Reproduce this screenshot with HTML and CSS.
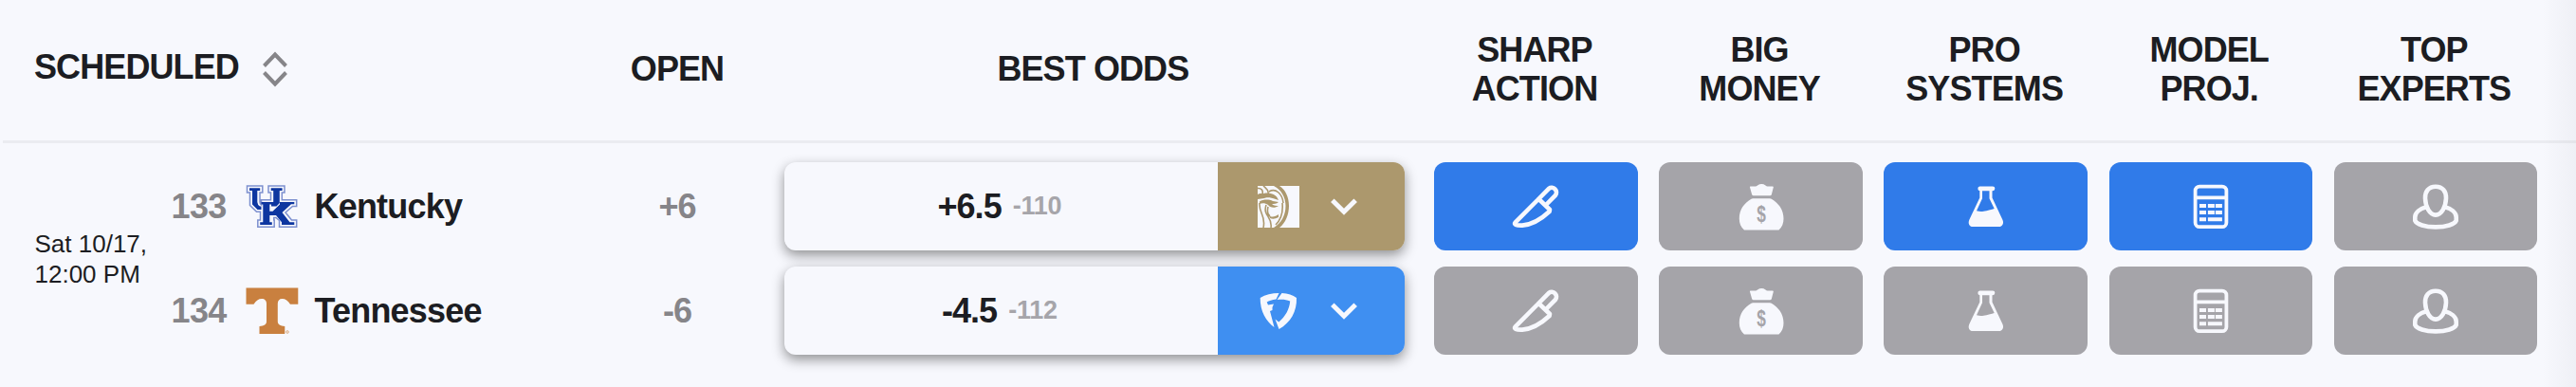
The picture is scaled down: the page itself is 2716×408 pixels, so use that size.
FILE: index.html
```html
<!DOCTYPE html>
<html lang="en">
  <head>
    <meta charset="utf-8">
    <title>Odds</title>
    <link rel="stylesheet" href="styles.css">
  </head>
  <body>
    <!-- shared icons -->
    <svg class="sprite" width="0" height="0">
      <symbol id="knife" viewBox="0 0 50 50">
        <path class="line" d="M27.5 17.5 L39 5.8 a5 5 0 0 1 7 7 L35 24 M27.5 17.5 L3.5 41.6 C2 43.4 4 44.8 11 44.6 C20 44 31 38 39.6 30 L40 28 L28 16.500"/>
      </symbol>
      <symbol id="bag" viewBox="0 0 50 50">
        <path d="M13.500 3.400 h5.500 q1-.2 2-1 q4.500-2.600 8.500 0 q1 .8 2 1 h5.500 q1 .1 .8 1.200 l-2 7.600 q-.4 1.100-1.600 1.100 h-17.400 q-1.200 0-1.600-1.100 l-2.200-7.600 q-.2-1.100 .5-1.200z"/>
        <path d="M16 16.200 h18 q1 0 1.800.6 C43 21 48.500 28 48.500 37.500 C48.500 42.500 47 46.500 43.500 49.600 H7 C3.500 46.500 1.800 42.500 1.800 37.500 C1.800 28 7 21 14.500 16.800 q.8-.6 1.500-.6z"/>
        <text class="dollar" transform="translate(25 40.500) scale(.75 1)" text-anchor="middle">$</text>
      </symbol>
      <symbol id="flask" viewBox="0 0 50 50">
        <path d="M18.200 3.500 h13.800 a2.200 2.200 0 0 1 0 4.700 h-.5 v7.300 L42.300 38.500 c2 4-.2 7.600-3.800 7.600 H11 c-3.600 0-5.400-3.600-3.600-7.600 L18.300 15.500 V8.200 a2.400 2.400 0 0 1 -.1-4.700z M21 8.200 V16.200 L15 29.300 C21 31 24 29.500 33.700 27 L28.500 16.200 V8.200z" fill-rule="evenodd"/>
      </symbol>
      <symbol id="calc" viewBox="0 0 50 50">
        <rect class="line calc-line" x="8.600" y="3.600" width="32.800" height="42.600" rx="4.500"/>
        <path d="M8 13.400h34v3.800H8z M13 22h7v4h-7z M21.900 22h7v4h-7z M29.900 22h7v4h-7z M13 29h7v4h-7z M21.900 29h7v4h-7z M29.900 29h7v4h-7z M13 36.200h7v4h-7z M21.900 36.200h15v4h-15z"/>
      </symbol>
      <symbol id="person" viewBox="0 0 50 50">
        <path class="line" d="M25 3.700 C32.500 3.700 36.300 9 36 16 C35.600 25 31.500 33.600 25 33.600 C18.500 33.600 14.400 25 14 16 C13.700 9 17.500 3.700 25 3.700z M15 25.300 C8.500 27 3.300 31 3.300 36 V39.500 C5 43.500 14 46.400 25 46.400 C36 46.400 45 43.500 46.700 39.500 V36 C46.700 31 41.500 27 35 25.300"/>
      </symbol>
      <symbol id="chevron" viewBox="0 0 30 20">
        <path class="line chevron-line" d="M2.800 3.200 L15 15.200 L27.200 3.200"/>
      </symbol>
    </svg>

    <div class="board">
      <div class="header">
        <div class="col-scheduled">
          <span class="sort-label">SCHEDULED</span>
          <svg class="sort" viewBox="0 0 28 40"><path d="M2.500 16.500 L14 4.500 L25.500 16.500 M2.500 23.500 L14 35.500 L25.500 23.500"/></svg>
        </div>
        <div class="col-open">OPEN</div>
        <div class="col-odds">BEST ODDS</div>
        <div class="col-pro">SHARP<br>ACTION</div>
        <div class="col-pro">BIG<br>MONEY</div>
        <div class="col-pro">PRO<br>SYSTEMS</div>
        <div class="col-pro">MODEL<br>PROJ.</div>
        <div class="col-pro">TOP<br>EXPERTS</div>
      </div>

      <div class="game">
        <div class="date">Sat 10/17,<br>12:00 PM</div>
        <div class="teams">
          <div class="row">
            <div class="team">
              <span class="rotation">133</span>
              <svg class="logo" viewBox="0 0 56 50">
                <path class="uk-edge" d="M1.500 3 H17.800 V10 H15 V20 Q15 22 16.500 23 V17.800 H26.500 V10 H24 V3 H41 V10 H38.300 V17.800 H53.700 V24.500 H49.500 L42 31 L48.500 39 H53.700 V46.300 H35.500 V39.500 L32 36.500 H29.800 V39 H30.200 V46.300 H12.800 V39 H15.500 V30.200 H11.500 L4.500 23.500 V10 H1.500z"/>
                <path class="uk-fill" d="M4 5.300 H15.200 V8 H12.300 V20 Q12.500 23 15 24.500 H16.500 V28 H12.500 L7 22.500 V8 H4z M26.700 5.300 H38.600 V8 H35.800 V21 L32.500 24.500 H27 V20 H29.200 V8 H26.700z M16.500 20 H27.500 V22.500 H25.300 V29.800 H28.500 L36 22.500 V20 H51.300 V22.300 H48 L38.500 31 L46.500 41.300 H51.300 V44 H38 V41.300 L32 34 H25.300 V41.300 H27.800 V44 H15.200 V41.300 H18.300 V22.500 H16.500z"/>
              </svg>
              <span class="name">Kentucky</span>
            </div>
            <div class="col-open line-open">+6</div>
            <div class="col-odds odds-box">
              <div class="odds"><b>+6.5</b><small>-110</small></div>
              <div class="book book-mgm">
                <svg class="book-logo" viewBox="0 0 44 44">
                  <path class="book-fill" d="M0 0h44v44H0z"/>
                  <path class="mgm-fill" d="M17 0 C25 4 29.500 12 29.500 21 C29.500 31 25 39 17 44 H23 C29.500 39 33 30 33 21 C33 12 29.500 4 23 0z M0 9 C3 7 5 9 8 7.500 C14 7 20 9 22 15 L19 14 C14 12 9 12 7 13 L0 14z M2 16.500 C6 14 12 14 16 16 L22 17 C20 19 17 19 15 19 C17 21 20 21 22 21 C18 24 13 23 11 20 C8 18 5 18 2 19z M12 31 C15 34 19 32 22 30 L22 33 Q17 36 13 34z"/>
                  <path class="mgm-line" d="M0 2.500 C4 2 6 5 5 9 M6 0 C9 3 12 4 11 8 M12 6 C19 2 26 8 27 18 M2 18 C1 29 9 31 6 44 M9 20 C5 32 16 32 14 44 M11 22 C10 26 10 30 13 32 M26 18 C27 28 24 36 19 41"/>
                </svg>
                <svg class="chevron"><use href="#chevron"/></svg>
              </div>
            </div>
            <div class="col-pro pro active"><svg><use href="#knife"/></svg></div>
            <div class="col-pro pro"><svg><use href="#bag"/></svg></div>
            <div class="col-pro pro active"><svg><use href="#flask"/></svg></div>
            <div class="col-pro pro active"><svg><use href="#calc"/></svg></div>
            <div class="col-pro pro"><svg><use href="#person"/></svg></div>
          </div>

          <div class="row">
            <div class="team">
              <span class="rotation">134</span>
              <svg class="logo" viewBox="0 0 56 50">
                <path class="tn-fill" d="M.5 .5 H55.300 V17.700 H47 C44.500 14 42 12 38.500 12 C35.500 12 33.800 14 33.800 17 V36 C33.800 39 36.500 40.500 41.300 41 V49 H14.500 V41 C19.500 40.500 22 39 22 36 V17 C22 14 20 12 17 12 C13.500 12 11 14 8.500 17.700 H.5z"/>
                <circle class="tn-mark" cx="44" cy="47" r="1.300"/>
              </svg>
              <span class="name">Tennessee</span>
            </div>
            <div class="col-open line-open">-6</div>
            <div class="col-odds odds-box">
              <div class="odds"><b>-4.5</b><small>-112</small></div>
              <div class="book book-fanduel">
                <svg class="book-logo" viewBox="0 0 44 44">
                  <path class="book-fill" d="M22.500 3 L19.500 9.500 C15 10 12 11 9.700 12.500 L11 15.500 L17 14.500 L15.500 18 L15.500 21 L13 22 L17.500 39 C9 33 2.500 22 2.700 8 C8 4.500 15 3 22.500 3z M25.500 3 C32 3.300 37 5 41 8 C41.500 22 35 34 22.500 41 L18.500 30.500 L22.300 33.500 C29 28 33.500 20 34.200 11.500 C30 9.700 26 9.500 20.500 10z"/>
                </svg>
                <svg class="chevron"><use href="#chevron"/></svg>
              </div>
            </div>
            <div class="col-pro pro"><svg><use href="#knife"/></svg></div>
            <div class="col-pro pro"><svg><use href="#bag"/></svg></div>
            <div class="col-pro pro"><svg><use href="#flask"/></svg></div>
            <div class="col-pro pro"><svg><use href="#calc"/></svg></div>
            <div class="col-pro pro"><svg><use href="#person"/></svg></div>
          </div>
        </div>
      </div>
      <div class="edge-fade"></div>
    </div>
  </body>
</html>
```
FILE: styles.css
```css
* {
  box-sizing: border-box;
}
body {
  margin: 0;
  background-color: #f7f8fd;
  color: #1c1d22;
  font-family: "Liberation Sans", Arial, sans-serif;
  font-size: 36px;
  font-weight: bold;
}
.sprite {
  display: none;
}
.board {
  position: relative;
  height: 408px;
  padding-left: 3px;
  overflow: hidden;
}

/* header */
.header {
  display: flex;
  align-items: center;
  height: 151px;
  padding: 0 0 3px 33px;
  border-bottom: 3px solid #ebecf1;
  line-height: 41px;
  letter-spacing: -0.9px;
  text-align: center;
}
.col-scheduled {
  display: flex;
  align-items: center;
  width: 565px;
}
.sort-label {
  padding-bottom: 5px;
}
.sort {
  width: 28px;
  height: 40px;
  margin-left: 24px;
}
.sort path {
  fill: none;
  stroke: #868589;
  stroke-width: 4;
}
.col-open {
  flex: none;
  width: 226px;
  text-align: center;
}
.col-odds {
  flex: none;
  width: 653.7px;
  margin-right: 31.6px;
}
.col-pro {
  flex: none;
  width: 214.4px;
  margin-right: 22.7px;
}
.header .col-odds,
.header .col-pro {
  padding-right: 3px;
}

/* game rows */
.game {
  display: flex;
  align-items: center;
  padding: 20.3px 0 0 33.500px;
}
.date {
  width: 146.500px;
  font-size: 26px;
  font-weight: normal;
  line-height: 32px;
  white-space: nowrap;
}
.teams {
  display: flex;
  flex-direction: column;
  gap: 17.2px;
}
.row {
  display: flex;
  align-items: center;
  height: 92.7px;
}
.team {
  display: flex;
  align-items: center;
  width: 418px;
}
.rotation {
  width: 78px;
  margin-left: -2.500px;
  color: #868589;
  letter-spacing: -0.6px;
}
.logo {
  width: 56px;
  height: 50px;
  margin-right: 17px;
}
.name {
  letter-spacing: -0.8px;
}
.uk-edge {
  fill: #f7f8fd;
  stroke: #7d90cf;
  stroke-width: 1.5;
}
.uk-fill {
  fill: #0d36a0;
}
.tn-fill {
  fill: #c9803f;
}
.tn-mark {
  fill: none;
  stroke: #dcae87;
}
.line-open {
  color: #868589;
  letter-spacing: -1px;
}

/* best odds */
.odds-box {
  display: flex;
  height: 92.7px;
  border-radius: 12px;
  background-color: #f7f8fd;
  box-shadow: 0 5px 13px rgba(0, 0, 0, 0.42);
}
.odds {
  display: flex;
  align-items: center;
  justify-content: center;
  gap: 12px;
  width: 457px;
  padding-right: 3px;
  letter-spacing: -1px;
}
.odds small {
  font-size: 27px;
  letter-spacing: -0.2px;
  color: #a6a5aa;
}
.book {
  display: flex;
  align-items: center;
  flex: 1;
  padding-left: 42px;
  border-radius: 0 12px 12px 0;
}
.book-mgm {
  background-color: #ac986d;
}
.book-fanduel {
  background-color: #3f8ff1;
}
.book-logo {
  width: 44px;
  height: 44px;
}
.book-fill {
  fill: #f7f8fd;
}
.mgm-fill {
  fill: #ac986d;
}
.mgm-line {
  fill: none;
  stroke: #ac986d;
  stroke-width: 1.6;
}
.chevron {
  width: 30px;
  height: 20px;
  margin-left: 32px;
  color: #f7f8fd;
}

/* pro report buttons */
.pro {
  --pro-bg: #a5a4a9;
  display: flex;
  align-items: center;
  justify-content: center;
  height: 92.7px;
  border-radius: 12px;
  background-color: var(--pro-bg);
  color: #f7f8fd;
  fill: currentColor;
}
.pro.active {
  --pro-bg: #307be9;
}
.pro svg {
  width: 50px;
  height: 50px;
}
.line {
  fill: none;
  stroke: currentColor;
  stroke-width: 4.6;
  stroke-linejoin: round;
}
.calc-line {
  stroke-width: 3.8;
}
.chevron-line {
  stroke-width: 5;
  stroke-linejoin: miter;
}
.dollar {
  fill: var(--pro-bg);
  font-size: 23px;
  letter-spacing: 0;
}

.edge-fade {
  position: absolute;
  top: 0;
  right: 0;
  width: 36px;
  height: 100%;
  background: linear-gradient(to right, rgba(40, 40, 60, 0), rgba(40, 40, 60, 0.04));
}
```
